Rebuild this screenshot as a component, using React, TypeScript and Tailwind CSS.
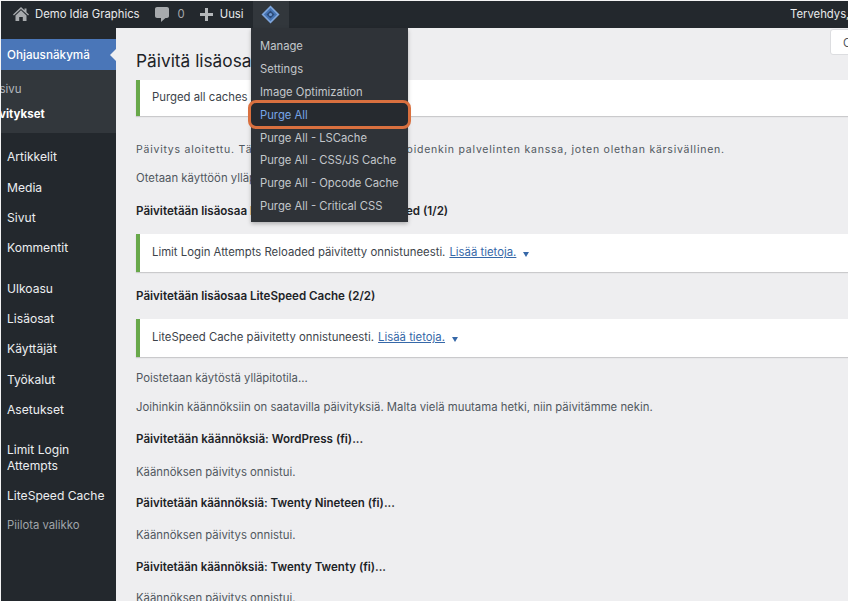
const sidebarGroups = [
  { items: ['Artikkelit', 'Media', 'Sivut', 'Kommentit'], className: 'pt-[9px]' },
  { items: ['Ulkoasu', 'Lisäosat', 'Käyttäjät', 'Työkalut', 'Asetukset'], className: 'pt-[10px]' },
]

const menuItems = [
  'Manage',
  'Settings',
  'Image Optimization',
  'Purge All',
  'Purge All - LSCache',
  'Purge All - CSS/JS Cache',
  'Purge All - Opcode Cache',
  'Purge All - Critical CSS',
]

const HomeIcon = () => (
  <svg viewBox="0 0 16 16" className="h-[16px] w-[16px] fill-[#a7aaad]">
    <path d="M8 1l3.500 3.300V2.400h2v3.800L16 8.500l-.9 1L8 2.900.9 9.500 0 8.500z" />
    <path d="M8 4.300l5.500 5.100V15H9.800v-4H6.200v4H2.500V9.400z" />
  </svg>
)

const CommentIcon = () => (
  <svg viewBox="0 0 14 15" className="h-[15px] w-[14px] fill-[#a7aaad]">
    <path d="M2 0h10c1.100 0 2 .9 2 2v7c0 1.100-.9 2-2 2h-1.500L6 15v-4H2c-1.100 0-2-.9-2-2V2C0 .9.900 0 2 0z" />
  </svg>
)

const PlusIcon = () => (
  <svg viewBox="0 0 13 13" className="h-[13px] w-[13px] fill-[#b4b7ba]">
    <path d="M13 5v3H8v5H5V8H0V5h5V0h3v5z" />
  </svg>
)

const LogoIcon = () => (
  <svg viewBox="0 0 20 20" className="h-[19px] w-[19px]">
    <path d="M10 .500l9.500 9.500-9.500 9.500L.500 10z" fill="#7fa6dc" />
    <path d="M10 3l7 7-7 7-7-7z" fill="#4674b4" />
    <path d="M10 5.800l4.200 4.200-4.200 4.200L5.800 10z" fill="#2b4a78" />
    <circle cx="10" cy="10" r="1.700" fill="#6f9ad6" />
  </svg>
)

const Notice = ({ children, className }: { children: React.ReactNode; className: string }) => (
  <div className={`flex items-center border-l-[4px] border-[#68a84a] bg-white pl-3 text-[#3c434a] shadow-[0_1px_1px_rgba(0,0,0,0.15)] ${className}`}>
    {children}
  </div>
)

const Details = () => (
  <>
    <span className="ml-1 text-[#3668a8] underline">Lisää tietoja.</span>
    <span className="ml-[7px] mt-[2px] h-0 w-0 border-x-[3.500px] border-t-[5px] border-x-transparent border-t-[#3668a8]" />
  </>
)

const App = () => {
  return (
    <div className="relative h-[601px] w-[848px] overflow-hidden bg-[#eeeef0] font-['Inter',sans-serif] text-[11.35px] text-[#50575e]">
      <header className="flex h-[28px] items-center bg-[#23282d] text-[11.3px] text-[#e8eaec]">
        <div className="ml-[13px] flex items-center gap-[6px]">
          <HomeIcon />
          <span>Demo Idia Graphics</span>
        </div>
        <div className="ml-[15px] flex items-center gap-[9px] text-[#a7aaad]">
          <CommentIcon />
          <span>0</span>
        </div>
        <div className="ml-[15px] flex items-center gap-[7px]">
          <PlusIcon />
          <span>Uusi</span>
        </div>
        <div className="ml-[9px] flex h-full w-[36px] items-center justify-center bg-[#32373c]">
          <LogoIcon />
        </div>
        <div className="ml-auto w-[58px] overflow-hidden whitespace-nowrap">Tervehdys, admin</div>
      </header>

      <div className="flex h-[573px]">
        <aside className="w-[116px] shrink-0 bg-[#23282d] pt-[11px] text-[12.1px] text-[#eceef0]">
          <div className="relative flex h-[31px] items-center bg-[#4a76b8] pl-[7px] pt-[2px] text-[11.7px] font-medium text-white">
            Ohjausnäkymä
            <span className="absolute right-0 top-[10px] h-0 w-0 border-y-[6px] border-r-[6px] border-y-transparent border-r-[#eeeef0]" />
          </div>
          <div className="h-[63px] overflow-hidden bg-[#32373c] pt-[9px] text-[11.5px] leading-[20px]">
            <div className="-ml-[18px] text-[#b4b9be]">Etusivu</div>
            <div className="-ml-[18px] mt-[5px] font-bold text-white">Päivitykset</div>
          </div>
          {sidebarGroups.map((group) => (
            <div key={group.items[0]} className={group.className}>
              {group.items.map((item) => (
                <div key={item} className="flex h-[30.4px] items-center pl-[7px]">
                  {item}
                </div>
              ))}
            </div>
          ))}
          <div className="pl-[7px] pt-[16px] leading-[16px]">
            Limit Login
            <br />
            Attempts
          </div>
          <div className="pl-[7px] pt-[14px] leading-[16px]">LiteSpeed Cache</div>
          <div className="pl-[7px] pt-[14px] text-[11.3px] leading-[14px] text-[#a0a5aa]">Piilota valikko</div>
        </aside>

        <main className="min-w-0 flex-1 overflow-hidden pl-[20px] whitespace-nowrap">
          <h1 className="mt-[20px] h-[26px] text-[17.3px] leading-[26px] text-[#1d2327]">Päivitä lisäosat</h1>
          <Notice className="mt-[6px] h-[36px]">Purged all caches successfully.</Notice>
          <p className="mt-[27px] h-[14px] text-[10.5px] leading-[14px] tracking-[0.77px]">
            Päivitys aloitettu. Tämä voi viedä hetken aikaa joidenkin palvelinten kanssa, joten olethan kärsivällinen.
          </p>
          <p className="mt-[14px] h-[14px] leading-[14px]">Otetaan käyttöön ylläpitotila...</p>
          <p className="mt-[19px] h-[14px] text-[11.6px] font-semibold leading-[14px] text-[#1d2327]">
            Päivitetään lisäosaa Limit Login Attempts Reloaded (1/2)
          </p>
          <Notice className="mt-[16px] h-[38px]">
            Limit Login Attempts Reloaded päivitetty onnistuneesti.
            <Details />
          </Notice>
          <p className="mt-[17px] h-[14px] text-[11.6px] font-semibold leading-[14px] text-[#1d2327]">
            Päivitetään lisäosaa LiteSpeed Cache (2/2)
          </p>
          <Notice className="mt-[16px] h-[38px]">
            LiteSpeed Cache päivitetty onnistuneesti.
            <Details />
          </Notice>
          <p className="mt-[14px] h-[14px] leading-[14px]">Poistetaan käytöstä ylläpitotila...</p>
          <p className="mt-[15px] h-[14px] leading-[14px]">
            Joihinkin käännöksiin on saatavilla päivityksiä. Malta vielä muutama hetki, niin päivitämme nekin.
          </p>
          <p className="mt-[18px] h-[14px] text-[11.6px] font-semibold leading-[14px] text-[#1d2327]">Päivitetään käännöksiä: WordPress (fi)...</p>
          <p className="mt-[19px] h-[14px] leading-[14px]">Käännöksen päivitys onnistui.</p>
          <p className="mt-[17px] h-[14px] text-[11.5px] font-semibold leading-[14px] text-[#1d2327]">Päivitetään käännöksiä: Twenty Nineteen (fi)...</p>
          <p className="mt-[18px] h-[14px] leading-[14px]">Käännöksen päivitys onnistui.</p>
          <p className="mt-[18px] h-[14px] text-[11.5px] font-semibold leading-[14px] text-[#1d2327]">Päivitetään käännöksiä: Twenty Twenty (fi)...</p>
          <p className="mt-[17px] h-[14px] leading-[14px]">Käännöksen päivitys onnistui.</p>
        </main>
      </div>

      {/* screen options tab */}
      <div className="absolute left-[830px] top-[29px] h-[26px] w-[40px] rounded-[3px] border border-[#dcdde0] bg-white pl-[12px] pt-[5px] text-[#50575e]">
        Ohje
      </div>

      {/* admin bar dropdown */}
      <div className="absolute left-[251px] top-[28px] h-[194px] w-[157px] bg-[#2f3338] pt-[7px] text-[11.25px] text-[#c3c7cb] shadow-[0_2px_4px_rgba(0,0,0,0.25)]">
        <div className="absolute -left-[3px] top-[72px] h-[29px] w-[163px] rounded-[8px] border-[3px] border-[#d9703f] bg-[#262a2f]" />
        {menuItems.map((item) => (
          <div
            key={item}
            className={`relative flex h-[22.900px] items-center pl-[9px] ${item === 'Purge All' ? 'text-[#76a5e8]' : ''}`}
          >
            {item}
          </div>
        ))}
      </div>

      {/* light edge of the screenshot */}
      <div className="pointer-events-none absolute inset-0 border-l border-t border-[#f4f4f5]" />
    </div>
  )
}

export default App
